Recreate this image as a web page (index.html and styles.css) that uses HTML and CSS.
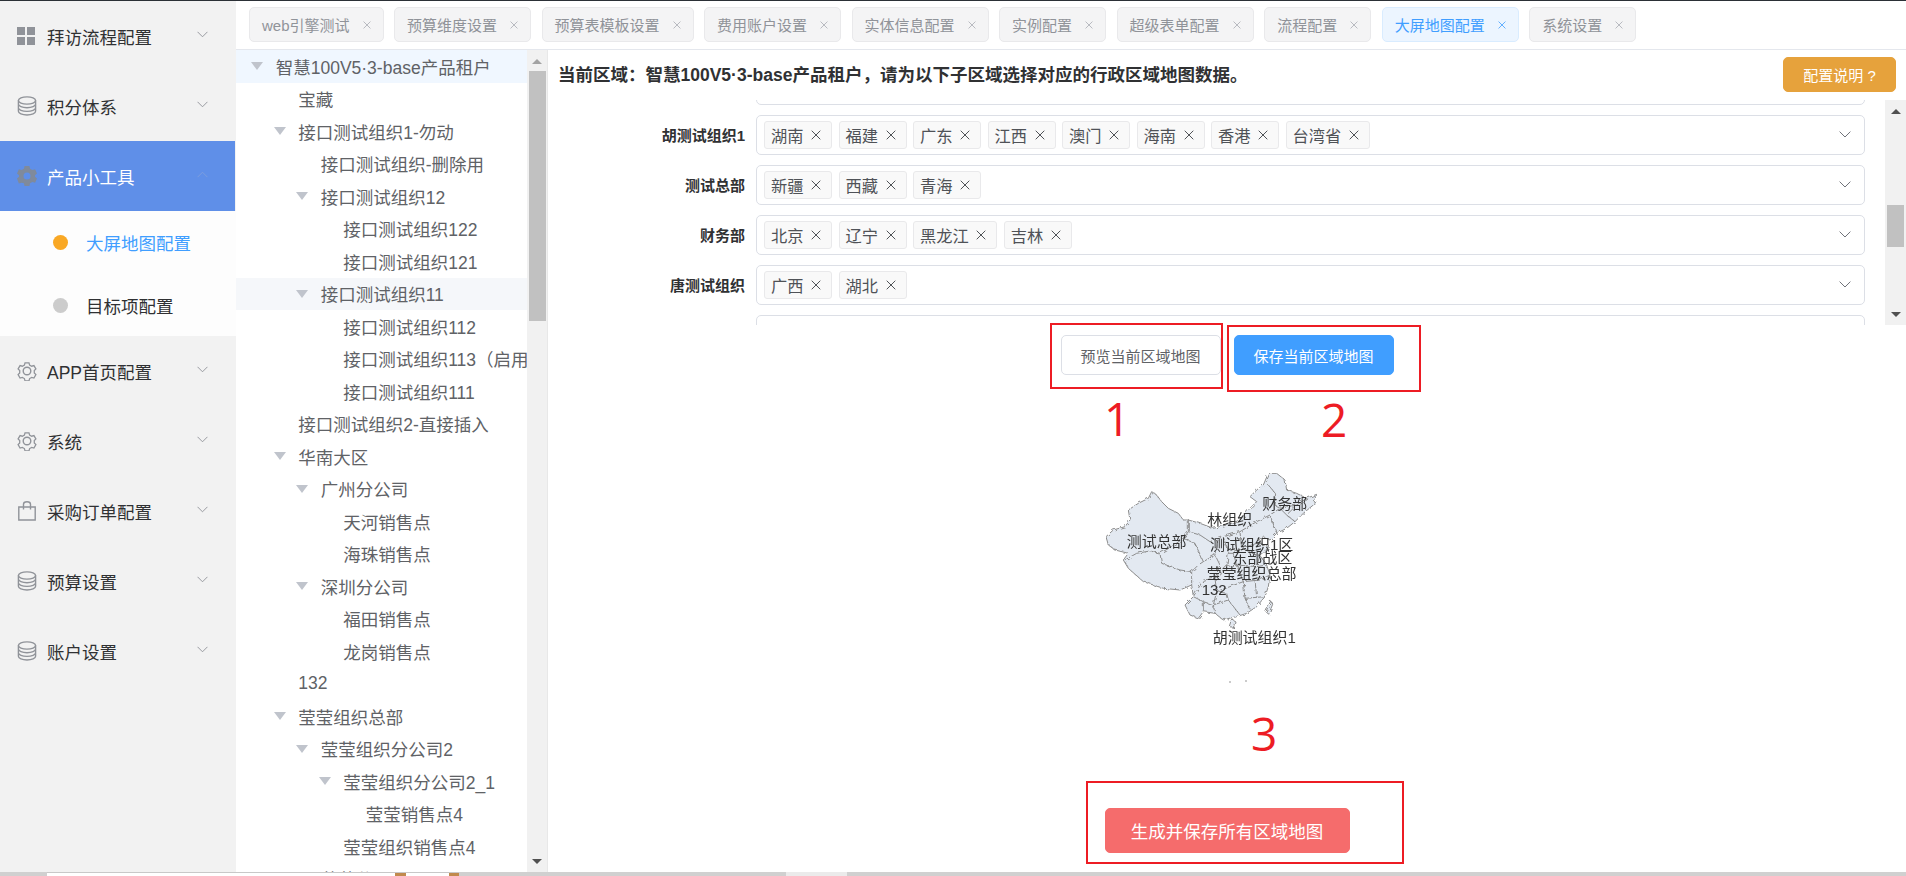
FILE: index.html
```html
<!DOCTYPE html>
<html lang="zh-CN">
<head>
    <meta charset="UTF-8">
    <title>大屏地图配置</title>
    <link rel="stylesheet" href="styles.css">
</head>
<body>
    <svg class="icon-defs" aria-hidden="true">
        <symbol id="i-grid" viewBox="0 0 18 18"><path d="M0 0h8v8H0zM10 0h8v8h-8zM0 10h8v8H0zM10 10h8v8h-8z" fill="currentColor"/></symbol>
        <symbol id="i-db" viewBox="0 0 20 20"><g fill="none" stroke="currentColor" stroke-width="1.4"><ellipse cx="10" cy="4.5" rx="8.6" ry="3.6"/><path d="M1.4 4.5v10.8c0 2 3.8 3.7 8.6 3.7s8.600-1.700 8.600-3.700V4.500M1.400 8.100c0 2 3.800 3.700 8.600 3.700s8.600-1.700 8.600-3.700M1.400 11.700c0 2 3.800 3.700 8.600 3.700s8.600-1.700 8.600-3.700"/></g></symbol>
        <symbol id="i-gear" viewBox="0 0 20 20"><g fill="none" stroke="currentColor" stroke-width="1.4"><path d="M7.800 1h4.400l.7 2.500 2.300 1.300 2.500-.7 2.200 3.800-1.800 1.800v2.600l1.800 1.800-2.200 3.800-2.500-.7-2.300 1.300-.7 2.500H7.800l-.7-2.500-2.300-1.300-2.500.7L.1 14.100l1.800-1.800V9.700L.1 7.900l2.200-3.800 2.500.7 2.300-1.300z" transform="translate(1 .9) scale(.9)"/><circle cx="10" cy="10" r="3.800"/></g></symbol>
        <symbol id="i-gear-fill" viewBox="0 0 20 20"><path fill-rule="evenodd" fill="currentColor" d="M7.600 0h4.800l.7 2.700 2.300 1.300 2.700-.7L20 7.400 18 9.300v1.400l2 1.900-1.900 4.100-2.700-.7-2.300 1.300-.7 2.700H7.600l-.7-2.700L4.600 16.700l-2.700.7L0 12.600l2-1.900V9.300L0 7.400l1.900-4.100 2.700.7 2.300-1.300zM10 6.500a3.500 3.500 0 1 0 0 7 3.500 3.500 0 0 0 0-7z"/></symbol>
        <symbol id="i-bag" viewBox="0 0 18 20"><g fill="none" stroke="currentColor" stroke-width="1.400"><path d="M.8 6h16.400v13H.8zM5.500 8.500V3.200C5.500 1.800 6.800.8 9 .8s3.500 1 3.500 2.400v5.300"/></g></symbol>
        <symbol id="i-down" viewBox="0 0 12 7"><path d="M.6.600 6 6l5.400-5.400" fill="none" stroke="currentColor" stroke-width="1"/></symbol>
        <symbol id="i-up" viewBox="0 0 12 7"><path d="M.6 6.400 6 1l5.400 5.400" fill="none" stroke="currentColor" stroke-width="1"/></symbol>
        <symbol id="i-x" viewBox="0 0 10 10"><path d="M.7.700l8.600 8.600M9.300.700.700 9.300" fill="none" stroke="currentColor" stroke-width="1"/></symbol>
    </svg>

    <div class="top-line"></div>

    <div class="app">
        <aside class="sidebar">
            <div class="menu-item"><svg class="menu-icon grid"><use href="#i-grid"/></svg><span>拜访流程配置</span><svg class="menu-arrow"><use href="#i-down"/></svg></div>
            <div class="menu-item"><svg class="menu-icon"><use href="#i-db"/></svg><span>积分体系</span><svg class="menu-arrow"><use href="#i-down"/></svg></div>
            <div class="menu-item active"><svg class="menu-icon"><use href="#i-gear-fill"/></svg><span>产品小工具</span><svg class="menu-arrow"><use href="#i-up"/></svg></div>
            <div class="submenu">
                <div class="submenu-item current"><i class="dot"></i><span>大屏地图配置</span></div>
                <div class="submenu-item"><i class="dot"></i><span>目标项配置</span></div>
            </div>
            <div class="menu-item"><svg class="menu-icon"><use href="#i-gear"/></svg><span>APP首页配置</span><svg class="menu-arrow"><use href="#i-down"/></svg></div>
            <div class="menu-item"><svg class="menu-icon"><use href="#i-gear"/></svg><span>系统</span><svg class="menu-arrow"><use href="#i-down"/></svg></div>
            <div class="menu-item"><svg class="menu-icon"><use href="#i-bag"/></svg><span>采购订单配置</span><svg class="menu-arrow"><use href="#i-down"/></svg></div>
            <div class="menu-item"><svg class="menu-icon"><use href="#i-db"/></svg><span>预算设置</span><svg class="menu-arrow"><use href="#i-down"/></svg></div>
            <div class="menu-item"><svg class="menu-icon"><use href="#i-db"/></svg><span>账户设置</span><svg class="menu-arrow"><use href="#i-down"/></svg></div>
        </aside>

        <div class="main">
            <div class="tabs">
                <div class="tab">web引擎测试<svg class="tab-close"><use href="#i-x"/></svg></div>
                <div class="tab">预算维度设置<svg class="tab-close"><use href="#i-x"/></svg></div>
                <div class="tab">预算表模板设置<svg class="tab-close"><use href="#i-x"/></svg></div>
                <div class="tab">费用账户设置<svg class="tab-close"><use href="#i-x"/></svg></div>
                <div class="tab">实体信息配置<svg class="tab-close"><use href="#i-x"/></svg></div>
                <div class="tab">实例配置<svg class="tab-close"><use href="#i-x"/></svg></div>
                <div class="tab">超级表单配置<svg class="tab-close"><use href="#i-x"/></svg></div>
                <div class="tab">流程配置<svg class="tab-close"><use href="#i-x"/></svg></div>
                <div class="tab current">大屏地图配置<svg class="tab-close"><use href="#i-x"/></svg></div>
                <div class="tab">系统设置<svg class="tab-close"><use href="#i-x"/></svg></div>
            </div>

            <div class="workspace">
                <div class="tree-panel">
                    <div class="tree">
                        <div class="node lv1 selected"><i class="caret"></i>智慧100V5·3-base产品租户</div>
                        <div class="node lv2"><i class="caret leaf"></i>宝藏</div>
                        <div class="node lv2"><i class="caret"></i>接口测试组织1-勿动</div>
                        <div class="node lv3"><i class="caret leaf"></i>接口测试组织-删除用</div>
                        <div class="node lv3"><i class="caret"></i>接口测试组织12</div>
                        <div class="node lv4"><i class="caret leaf"></i>接口测试组织122</div>
                        <div class="node lv4"><i class="caret leaf"></i>接口测试组织121</div>
                        <div class="node lv3 hover"><i class="caret"></i>接口测试组织11</div>
                        <div class="node lv4"><i class="caret leaf"></i>接口测试组织112</div>
                        <div class="node lv4"><i class="caret leaf"></i>接口测试组织113（启用）</div>
                        <div class="node lv4"><i class="caret leaf"></i>接口测试组织111</div>
                        <div class="node lv2"><i class="caret leaf"></i>接口测试组织2-直接插入</div>
                        <div class="node lv2"><i class="caret"></i>华南大区</div>
                        <div class="node lv3"><i class="caret"></i>广州分公司</div>
                        <div class="node lv4"><i class="caret leaf"></i>天河销售点</div>
                        <div class="node lv4"><i class="caret leaf"></i>海珠销售点</div>
                        <div class="node lv3"><i class="caret"></i>深圳分公司</div>
                        <div class="node lv4"><i class="caret leaf"></i>福田销售点</div>
                        <div class="node lv4"><i class="caret leaf"></i>龙岗销售点</div>
                        <div class="node lv2"><i class="caret leaf"></i>132</div>
                        <div class="node lv2"><i class="caret"></i>莹莹组织总部</div>
                        <div class="node lv3"><i class="caret"></i>莹莹组织分公司2</div>
                        <div class="node lv4"><i class="caret"></i>莹莹组织分公司2_1</div>
                        <div class="node lv5"><i class="caret leaf"></i>莹莹销售点4</div>
                        <div class="node lv4"><i class="caret leaf"></i>莹莹组织销售点4</div>
                        <div class="node lv3"><i class="caret leaf"></i>莹莹分公司</div>
                    </div>
                    <div class="scrollbar tree-scroll">
                        <i class="arrow-up"></i>
                        <div class="thumb"></div>
                        <i class="arrow-down"></i>
                    </div>
                </div>

                <div class="content">
                    <div class="content-head">
                        <div class="region-title">当前区域：智慧100V5·3-base产品租户，请为以下子区域选择对应的行政区域地图数据。</div>
                        <button class="btn btn-warn">配置说明 ?</button>
                    </div>

                    <div class="region-panel">
                        <div class="region-list">
                            <div class="region-row cut">
                                <label></label>
                                <div class="select"></div>
                            </div>
                            <div class="region-row">
                                <label>胡测试组织1</label>
                                <div class="select">
                                    <span class="tag">湖南<svg><use href="#i-x"/></svg></span>
                                    <span class="tag">福建<svg><use href="#i-x"/></svg></span>
                                    <span class="tag">广东<svg><use href="#i-x"/></svg></span>
                                    <span class="tag">江西<svg><use href="#i-x"/></svg></span>
                                    <span class="tag">澳门<svg><use href="#i-x"/></svg></span>
                                    <span class="tag">海南<svg><use href="#i-x"/></svg></span>
                                    <span class="tag">香港<svg><use href="#i-x"/></svg></span>
                                    <span class="tag">台湾省<svg><use href="#i-x"/></svg></span>
                                    <svg class="select-arrow"><use href="#i-down"/></svg>
                                </div>
                            </div>
                            <div class="region-row">
                                <label>测试总部</label>
                                <div class="select">
                                    <span class="tag">新疆<svg><use href="#i-x"/></svg></span>
                                    <span class="tag">西藏<svg><use href="#i-x"/></svg></span>
                                    <span class="tag">青海<svg><use href="#i-x"/></svg></span>
                                    <svg class="select-arrow"><use href="#i-down"/></svg>
                                </div>
                            </div>
                            <div class="region-row">
                                <label>财务部</label>
                                <div class="select">
                                    <span class="tag">北京<svg><use href="#i-x"/></svg></span>
                                    <span class="tag">辽宁<svg><use href="#i-x"/></svg></span>
                                    <span class="tag">黑龙江<svg><use href="#i-x"/></svg></span>
                                    <span class="tag">吉林<svg><use href="#i-x"/></svg></span>
                                    <svg class="select-arrow"><use href="#i-down"/></svg>
                                </div>
                            </div>
                            <div class="region-row">
                                <label>唐测试组织</label>
                                <div class="select">
                                    <span class="tag">广西<svg><use href="#i-x"/></svg></span>
                                    <span class="tag">湖北<svg><use href="#i-x"/></svg></span>
                                    <svg class="select-arrow"><use href="#i-down"/></svg>
                                </div>
                            </div>
                            <div class="region-row">
                                <label></label>
                                <div class="select"></div>
                            </div>
                        </div>
                        <div class="scrollbar region-scroll">
                            <i class="arrow-up"></i>
                            <div class="thumb"></div>
                            <i class="arrow-down"></i>
                        </div>
                    </div>

                    <div class="actions">
                        <button class="btn">预览当前区域地图</button>
                        <button class="btn btn-primary">保存当前区域地图</button>
                    </div>

                    <svg class="map" width="500" height="315" viewBox="0 0 500 315">
                        <filter id="rough" x="0" y="0" width="100%" height="100%">
                            <feTurbulence type="fractalNoise" baseFrequency=".09" numOctaves="2" seed="4"/>
                            <feDisplacementMap in="SourceGraphic" scale="13"/>
                        </filter>
                        <g transform="translate(123 80) scale(.3333)">
                            <g class="land" filter="url(#rough)">
                                <path d="M18 215 40 195 75 185 90 165 85 135 115 115 145 100 155 80 170 90 185 110 205 130 235 145 250 165 265 165 300 175 340 190 380 180 420 165 445 135 470 110 450 95 470 75 490 60 505 25 530 25 555 45 560 75 590 85 620 100 650 88 640 120 610 145 585 170 560 190 530 205 510 225 490 215 475 225 490 240 510 245 480 270 500 300 510 330 505 365 495 395 470 425 440 445 410 455 395 458 370 465 345 445 310 440 295 460 270 450 255 420 280 395 275 360 240 375 190 370 130 350 85 310 70 285 85 265 45 255 25 240Z"/>
                                <path d="M395 462 405 468 400 490 388 484Z"/>
                                <path d="M512 408 518 418 506 448 498 440Z"/>
                                <path class="line" d="M75 285 110 265 150 258 180 265 215 245 250 220 265 200 265 165"/>
                                <path class="line" d="M180 265 185 295 240 315 275 320 275 360"/>
                                <path class="line" d="M250 220 285 235 310 290 295 300 275 320"/>
                                <path class="line" d="M265 200 300 210 330 230 370 215 420 200 470 170 510 150 540 130"/>
                                <path class="line" d="M505 60 530 90 525 120 540 130 590 120 620 100"/>
                                <path class="line" d="M590 120 560 150 540 130M560 150 585 170M510 150 530 205"/>
                                <path class="line" d="M310 290 345 270 350 225M345 270 360 300 345 340 310 345 280 395"/>
                                <path class="line" d="M370 215 385 265 380 305 345 340M420 200 425 250 400 265 385 265"/>
                                <path class="line" d="M425 250 470 235 490 240M470 270 425 250M400 265 410 300 380 305"/>
                                <path class="line" d="M410 300 470 305 480 270M470 305 500 300M410 300 430 350 480 345 510 330"/>
                                <path class="line" d="M345 340 350 380 340 420 345 445M350 380 430 350M430 350 435 400 450 435"/>
                                <path class="line" d="M340 420 385 405 420 450M385 405 380 385 350 380M435 400 495 395M465 345 470 395"/>
                                <path class="line" d="M280 395 310 410 340 420M310 410 310 440"/>
                            </g>
                            <text x="487" y="133">财务部</text>
                            <text x="322" y="181">林组织</text>
                            <text x="80" y="245">测试总部</text>
                            <text x="330" y="256">测试组织1区</text>
                            <text x="397" y="293">东部战区</text>
                            <text x="320" y="342">莹莹组织总部</text>
                            <text x="305" y="389">132</text>
                            <text x="338" y="533">胡测试组织1</text>
                        </g>
                        <circle class="map-dot" cx="253" cy="297" r=".8"/>
                        <circle class="map-dot" cx="269" cy="296" r=".8"/>
                    </svg>

                    <div class="actions generate">
                        <button class="btn btn-danger">生成并保存所有区域地图</button>
                    </div>

                    <div class="mark mark-1"></div>
                    <div class="mark mark-2"></div>
                    <div class="mark mark-3"></div>
                    <div class="mark-no no-1">1</div>
                    <div class="mark-no no-2">2</div>
                    <div class="mark-no no-3">3</div>
                </div>
            </div>
        </div>
    </div>

    <div class="bottom-strip">
        <div class="strip-win"><i class="strip-brown one"></i><i class="strip-brown two"></i></div>
        <div class="strip-light"></div>
    </div>
</body>
</html>
```

FILE: styles.css
```css
html, body {
    margin: 0;
    height: 876px;
    overflow: hidden;
}
body {
    font-family: "Liberation Sans", "Noto Sans CJK SC", sans-serif;
    font-size: 17.5px;
    color: #606266;
    background-color: #fff;
    display: flex;
    flex-direction: column;
}
.icon-defs {
    position: absolute;
    width: 0;
    height: 0;
}
.top-line {
    height: 1px;
    flex: none;
    background-color: #2b3036;
}
.app {
    display: flex;
    height: 871px;
    flex: none;
}

/* left menu */
.sidebar {
    width: 236px;
    flex: none;
    background-color: #f2f2f2;
}
.menu-item {
    height: 70px;
    display: flex;
    align-items: center;
    padding: 0 27px 0 17px;
    color: #303133;
    margin-right: 1px;
}
.menu-icon {
    width: 20px;
    height: 20px;
    margin-right: 10px;
    color: #909399;
    flex: none;
}
.menu-icon.grid {
    width: 18px;
    height: 18px;
    margin-right: 12px;
}
.menu-arrow {
    width: 11px;
    height: 7px;
    margin: -4px 0 0 auto;
    color: #909399;
}
.menu-item.active {
    background-color: #5f8fe8;
    color: #fff;
}
.menu-item.active .menu-icon {
    color: #7f8a9c;
}
.menu-item.active .menu-arrow {
    color: #7f9fdc;
}
.submenu {
    background-color: #fdfdfd;
    height: 125px;
}
.submenu-item {
    height: 63px;
    display: flex;
    align-items: center;
    padding-left: 53px;
    color: #303133;
}
.submenu-item.current {
    color: #409eff;
}
.dot {
    width: 15px;
    height: 15px;
    border-radius: 50%;
    background-color: #ccc;
    margin-right: 18px;
}
.submenu-item.current .dot {
    background-color: #f9a825;
}

/* tabs */
.main {
    flex: 1;
    min-width: 0;
    display: flex;
    flex-direction: column;
}
.tabs {
    height: 42px;
    flex: none;
    display: flex;
    gap: 10.5px;
    padding: 6px 0 0 13px;
    border-bottom: 1px solid #e4e7ed;
}
.tab {
    height: 35px;
    box-sizing: border-box;
    display: flex;
    align-items: center;
    padding: 0 12px;
    font-size: 15px;
    color: #909399;
    background-color: #f4f4f5;
    border: 1px solid #e9e9eb;
    border-radius: 5px;
}
.tab-close {
    width: 8px;
    height: 8px;
    margin-left: 13px;
    color: #a8abb2;
}
.tab.current {
    color: #409eff;
    background-color: #ecf5ff;
    border-color: #d9ecff;
}
.tab.current .tab-close {
    color: #409eff;
}

.workspace {
    flex: 1;
    min-height: 0;
    display: flex;
}

/* organisation tree */
.tree-panel {
    width: 312px;
    flex: none;
    display: flex;
    border-right: 1px solid #e8e8e8;
    box-sizing: border-box;
}
.tree {
    flex: 1;
    min-width: 0;
    overflow: hidden;
}
.node {
    height: 32.5px;
    display: flex;
    align-items: center;
    white-space: nowrap;
}
.node.selected {
    background-color: #f0f7ff;
}
.node.hover {
    background-color: #f5f7fa;
}
.lv1 { padding-left: 15px; }
.lv2 { padding-left: 37.5px; }
.lv3 { padding-left: 60px; }
.lv4 { padding-left: 82.5px; }
.lv5 { padding-left: 105px; }
.caret {
    width: 0;
    height: 0;
    flex: none;
    margin-right: 12.7px;
    border-left: 6px solid transparent;
    border-right: 6px solid transparent;
    border-top: 8px solid #c0c4cc;
}
.caret.leaf {
    border-top-color: transparent;
}

/* fake native scrollbars */
.scrollbar {
    width: 20px;
    flex: none;
    background-color: #f1f1f1;
    display: flex;
    flex-direction: column;
    align-items: center;
}
.thumb {
    width: 17px;
    background-color: #c1c1c1;
}
.arrow-up, .arrow-down {
    width: 0;
    height: 0;
    border-left: 5px solid transparent;
    border-right: 5px solid transparent;
}
.arrow-up {
    margin-top: 9px;
    border-bottom: 5px solid #505050;
}
.arrow-down {
    margin-top: auto;
    margin-bottom: 8px;
    border-top: 5px solid #505050;
}
.tree-scroll .thumb {
    height: 250px;
    margin-top: 7px;
}
.tree-scroll .arrow-up {
    border-bottom-color: #a3a3a3;
}
.region-scroll {
    width: 21px;
}
.region-scroll .thumb {
    height: 42px;
    margin-top: 91px;
}

/* right side */
.content {
    flex: 1;
    min-width: 0;
    position: relative;
}
.content-head {
    height: 50px;
    display: flex;
    justify-content: space-between;
    padding: 7px 10px 0 10px;
    box-sizing: border-box;
}
.region-title {
    font-weight: bold;
    color: #303133;
    line-height: 36px;
    white-space: nowrap;
}
.btn {
    height: 40px;
    width: 160px;
    box-sizing: border-box;
    font-family: inherit;
    font-size: 15px;
    color: #606266;
    background-color: #fff;
    border: 1px solid #dcdfe6;
    border-radius: 5px;
}
.btn-warn {
    width: 113px;
    height: 35px;
    color: #fff;
    background-color: #e6a23c;
    border-color: #e6a23c;
}
.btn-primary {
    color: #fff;
    background-color: #409eff;
    border-color: #409eff;
}
.btn-danger {
    width: 245px;
    height: 45px;
    font-size: 17.5px;
    color: #fff;
    background-color: #f56c6c;
    border-color: #f56c6c;
}
.region-panel {
    height: 225px;
    display: flex;
    overflow: hidden;
}
.region-list {
    flex: 1;
    min-width: 0;
    padding-right: 20.5px;
}
.region-row {
    display: flex;
    align-items: center;
    margin-bottom: 10px;
}
.region-row.cut {
    margin-top: -35.5px;
}
.region-row label {
    width: 197px;
    flex: none;
    margin-right: 11px;
    text-align: right;
    font-size: 15px;
    font-weight: bold;
    color: #303133;
}
.select {
    flex: 1;
    height: 40px;
    box-sizing: border-box;
    display: flex;
    align-items: center;
    gap: 6.5px;
    padding: 0 13px 0 7px;
    background-color: #fff;
    border: 1px solid #dcdfe6;
    border-radius: 5px;
}
.tag {
    height: 28px;
    box-sizing: border-box;
    display: flex;
    align-items: center;
    padding: 0 10px 0 6px;
    font-size: 16.25px;
    color: #4f5257;
    background-color: #f9f9f9;
    border: 1px solid #e9e9eb;
    border-radius: 3px;
}
.tag svg {
    width: 10px;
    height: 10px;
    margin-left: 7.5px;
}
.select-arrow {
    width: 12px;
    height: 7px;
    margin-left: auto;
    color: #70737a;
}
.actions {
    display: flex;
    justify-content: center;
    gap: 13px;
    margin-top: 10px;
}
.actions.generate {
    margin-top: 108px;
}
.map {
    display: block;
    margin: 10px auto 0;
    filter: blur(.35px);
}
.land path {
    fill: #e3e9f1;
    stroke: #8c8c8c;
    stroke-width: 3;
    stroke-linejoin: round;
}
.land path.line {
    fill: none;
}
.map text {
    font-size: 45px;
    fill: #333;
}
.map-dot {
    fill: #888;
}

/* red marks drawn over the screen */
.mark {
    position: absolute;
    box-sizing: border-box;
    border: 2px solid #ed1c24;
}
.mark-1 { left: 502px; top: 273px; width: 173px; height: 66px; }
.mark-2 { left: 679px; top: 275px; width: 194px; height: 67px; }
.mark-3 { left: 538px; top: 731px; width: 318px; height: 83px; }
.mark-no {
    position: absolute;
    font-family: "Open Sans", sans-serif;
    font-size: 46px;
    line-height: 46px;
    color: #ed1c24;
}
.no-1 { left: 556px; top: 345px; }
.no-2 { left: 773px; top: 346px; }
.no-3 { left: 703px; top: 660px; }

.bottom-strip {
    height: 4px;
    flex: none;
    display: flex;
    background-color: #d0d0d0;
    padding-left: 47px;
}
.strip-win {
    width: 412px;
    background-color: #fff;
    border-top: 1px solid #c8c8c8;
    box-sizing: border-box;
    display: flex;
}
.strip-brown {
    width: 18px;
    height: 3px;
    background-color: #c18a4d;
}
.strip-brown.one {
    margin-left: 348px;
}
.strip-brown.two {
    margin-left: 43px;
}
.strip-light {
    width: 61px;
    margin-left: 327px;
    background-color: #ebebeb;
}
```
